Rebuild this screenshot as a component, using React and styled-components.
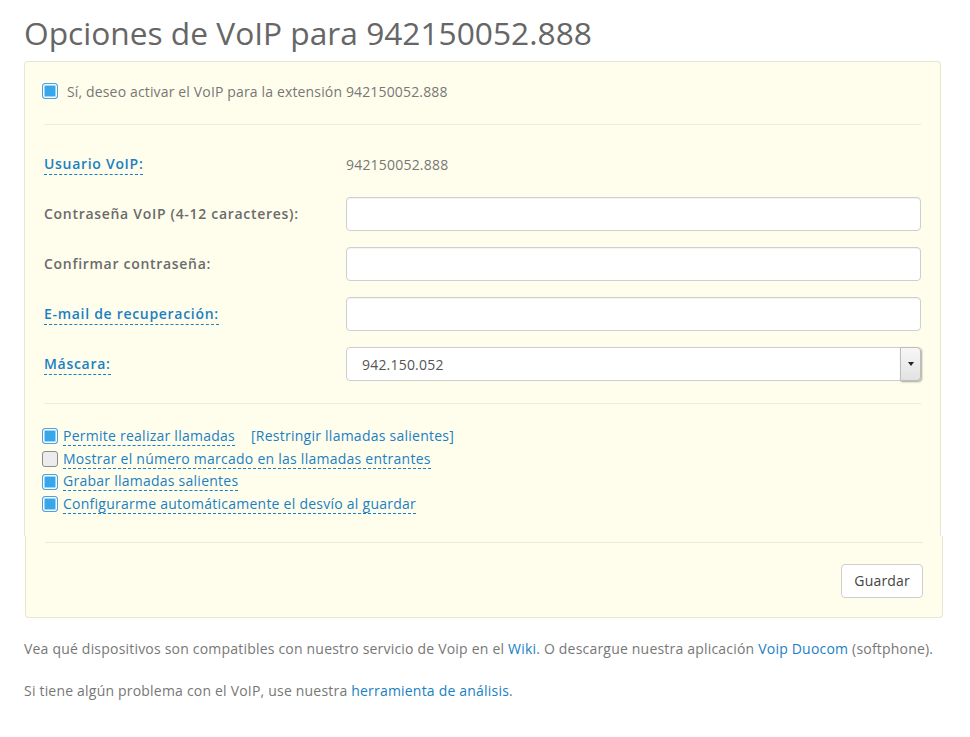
import React, { useState } from 'react';
import styled, { createGlobalStyle } from 'styled-components';

const GlobalStyle = createGlobalStyle`
  body {
    margin: 0;
    background: #fff;
    font-family: "Open Sans", "Liberation Sans", sans-serif;
    color: #777;
    letter-spacing: 0.2px;
  }
`;

const Page = styled.div`
  padding: 0 28px 0 24px;
  width: 918px;
`;

const Title = styled.h1`
  margin: 13px 0 8px;
  font-size: 31.7px;
  line-height: 40px;
  font-weight: 400;
  letter-spacing: 0;
  color: #666;
`;

const Fieldset = styled.div`
  background: #fffeec;
  border: 1px solid #e8e7d2;
  border-bottom: none;
  border-radius: 4px 4px 0 0;
  padding: 20px 19px 20px;
  margin-right: 1px;
`;

const Actions = styled.div`
  background: #fffeec;
  border: 1px solid #e8e7d2;
  border-top: none;
  border-radius: 0 0 4px 4px;
  padding: 6px 19px 19px;
  margin-left: 1px;
  margin-right: -1px;
`;

const Divider = styled.div`
  height: 1px;
  background: #ecebdc;
  margin: ${(p) => p.$margin || '0'};
`;

const Box = styled.span`
  box-sizing: border-box;
  flex: none;
  width: 16px;
  height: 16px;
  margin-left: -2px;
  border-radius: 3px;
  border: 1px solid ${(p) => (p.$checked ? '#4aa3df' : '#8c8c8c')};
  background: ${(p) => (p.$checked ? '#3aa6ea' : '#ececec')};
  box-shadow: ${(p) => (p.$checked ? 'inset 0 0 0 1.5px #fff' : 'none')};
  cursor: pointer;
`;

const ActivateRow = styled.label`
  display: flex;
  align-items: center;
  gap: 9px;
  height: 18px;
  font-size: 14px;
  letter-spacing: 0.15px;
  color: #777;
`;

const FormRow = styled.div`
  display: grid;
  grid-template-columns: 302px 1fr;
  align-items: center;
  height: 34px;
  margin-top: ${(p) => p.$top || '16px'};
`;

const Label = styled.span`
  justify-self: start;
  font-size: 14px;
  font-weight: 600;
  letter-spacing: 0.7px;
  color: ${(p) => (p.$help ? '#1a80c4' : '#6b6b6b')};
  border-bottom: ${(p) => (p.$help ? '1px dashed #1a80c4' : 'none')};
  line-height: 20px;
  cursor: ${(p) => (p.$help ? 'help' : 'default')};
`;

const Value = styled.span`
  font-size: 14px;
  color: #777;
`;

const Input = styled.input`
  box-sizing: border-box;
  height: 34px;
  width: 100%;
  border: 1px solid #cfcfcf;
  border-radius: 4px;
  background: #fff;
  box-shadow: inset 0 1px 1px rgba(0, 0, 0, 0.05);
  font: inherit;
  font-size: 14px;
  padding: 0 12px;
  outline: none;
`;

const Select = styled.div`
  position: relative;
  box-sizing: border-box;
  height: 34px;
  border: 1px solid #cfcfcf;
  border-radius: 4px;
  background: #fff;
  display: flex;
  align-items: center;
  padding-left: 15px;
  font-size: 14px;
  color: #555;
`;

const SelectArrow = styled.span`
  position: absolute;
  top: -1px;
  right: -1px;
  bottom: -1px;
  width: 19px;
  border-radius: 0 4px 4px 0;
  border: 1px solid #bdbdbd;
  background: linear-gradient(#f7f7f7, #e2e2e2);
  box-shadow: 1px 1px 2px rgba(0, 0, 0, 0.35);
  display: flex;
  align-items: center;
  justify-content: center;

  &::after {
    content: '';
    border-left: 3px solid transparent;
    border-right: 3px solid transparent;
    border-top: 4px solid #222;
  }
`;

const OptionList = styled.div`
  display: flex;
  flex-direction: column;
`;

const Option = styled.div`
  display: flex;
  align-items: center;
  gap: 5px;
  height: 22.7px;
  font-size: 14px;
  letter-spacing: 0.25px;
`;

const OptionText = styled.span`
  color: #1a80c4;
  border-bottom: 1px dashed #1a80c4;
  line-height: 18px;
  cursor: pointer;
`;

const Extra = styled.a`
  margin-left: 11px;
  color: #1a80c4;
  text-decoration: none;
  line-height: 18px;
`;

const ButtonRow = styled.div`
  display: flex;
  justify-content: flex-end;
  margin-top: 21px;
`;

const Button = styled.button`
  height: 34px;
  padding: 0 12px;
  background: #fff;
  border: 1px solid #cfcfcf;
  border-radius: 4px;
  font-family: inherit;
  font-size: 14px;
  letter-spacing: 0.2px;
  color: #444;
  cursor: pointer;
`;

const Note = styled.p`
  margin: 21px 0 0;
  font-size: 14px;
  line-height: 20px;
  letter-spacing: 0.2px;
  color: #777;

  & + & {
    margin-top: 22px;
  }
`;

const Link = styled.a`
  color: #1a80c4;
  text-decoration: none;
`;

const options = [
  { id: 'calls', text: 'Permite realizar llamadas', extra: '[Restringir llamadas salientes]', checked: true },
  { id: 'number', text: 'Mostrar el número marcado en las llamadas entrantes', checked: false },
  { id: 'record', text: 'Grabar llamadas salientes', checked: true },
  { id: 'forward', text: 'Configurarme automáticamente el desvío al guardar', checked: true },
];

export default function App() {
  const [active, setActive] = useState(true);
  const [checks, setChecks] = useState(
    Object.fromEntries(options.map((o) => [o.id, o.checked]))
  );

  const toggle = (id) => setChecks((c) => ({ ...c, [id]: !c[id] }));

  return (
    <Page>
      <GlobalStyle />
      <Title>Opciones de VoIP para 942150052.888</Title>

      <Fieldset>
        <ActivateRow onClick={() => setActive(!active)}>
          <Box $checked={active} />
          Sí, deseo activar el VoIP para la extensión 942150052.888
        </ActivateRow>

        <Divider $margin="24px 0 0" />

        <FormRow $top="22px">
          <Label $help>Usuario VoIP:</Label>
          <Value>942150052.888</Value>
        </FormRow>
        <FormRow>
          <Label>Contraseña VoIP (4-12 caracteres):</Label>
          <Input type="password" />
        </FormRow>
        <FormRow>
          <Label>Confirmar contraseña:</Label>
          <Input type="password" />
        </FormRow>
        <FormRow>
          <Label $help>E-mail de recuperación:</Label>
          <Input type="text" />
        </FormRow>
        <FormRow>
          <Label $help>Máscara:</Label>
          <Select>
            942.150.052
            <SelectArrow />
          </Select>
        </FormRow>

        <Divider $margin="22px 0 21px" />

        <OptionList>
          {options.map((o) => (
            <Option key={o.id}>
              <Box $checked={checks[o.id]} onClick={() => toggle(o.id)} />
              <OptionText>{o.text}</OptionText>
              {o.extra && <Extra href="#">{o.extra}</Extra>}
            </Option>
          ))}
        </OptionList>
      </Fieldset>

      <Actions>
        <Divider />
        <ButtonRow>
          <Button type="button">Guardar</Button>
        </ButtonRow>
      </Actions>

      <Note>
        Vea qué dispositivos son compatibles con nuestro servicio de Voip en el{' '}
        <Link href="#">Wiki</Link>. O descargue nuestra aplicación{' '}
        <Link href="#">Voip Duocom</Link> (softphone).
      </Note>
      <Note>
        Si tiene algún problema con el VoIP, use nuestra{' '}
        <Link href="#">herramienta de análisis</Link>.
      </Note>
    </Page>
  );
}
